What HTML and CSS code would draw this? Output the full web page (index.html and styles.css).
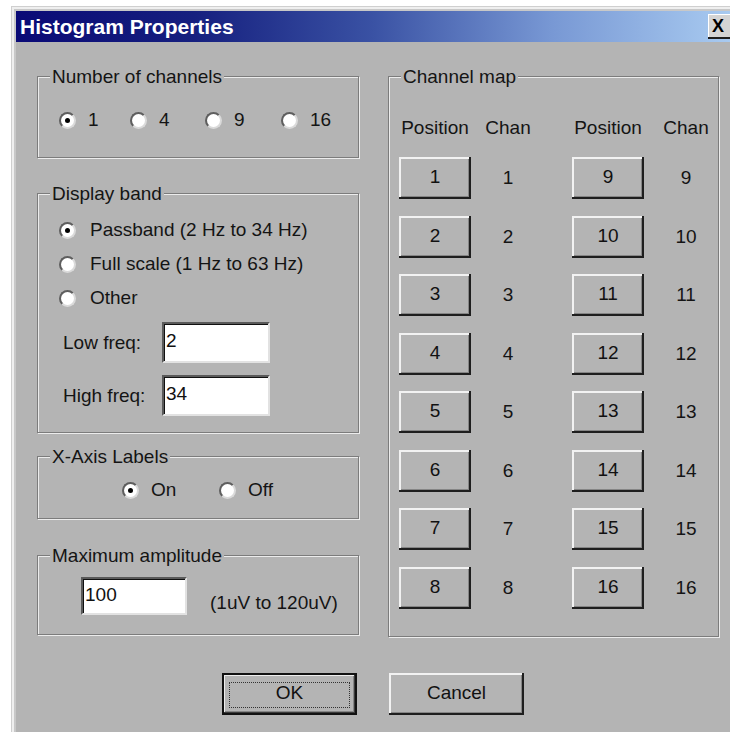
FILE: index.html
```html
<!DOCTYPE html>
<html lang="en">
<head>
<meta charset="utf-8">
<title>Histogram Properties</title>
<link rel="stylesheet" href="styles.css">
</head>
<body>
<div class="window">
  <div class="titlebar">
    <span class="title">Histogram Properties</span>
    <span class="close">X</span>
  </div>
  <div class="client">
    <div class="panels">
      <div class="left">
        <div class="group g-channels">
          <span class="group-title">Number of channels</span>
          <div class="channels">
            <div class="radio checked"><span class="dot"></span>1</div>
            <div class="radio"><span class="dot"></span>4</div>
            <div class="radio"><span class="dot"></span>9</div>
            <div class="radio"><span class="dot"></span>16</div>
          </div>
        </div>

        <div class="group g-band">
          <span class="group-title">Display band</span>
          <div class="band">
            <div class="radio checked"><span class="dot"></span>Passband (2 Hz to 34 Hz)</div>
            <div class="radio"><span class="dot"></span>Full scale (1 Hz to 63 Hz)</div>
            <div class="radio"><span class="dot"></span>Other</div>
            <div class="field field-low">
              <span class="field-label">Low freq:</span>
              <span class="input input-freq">2</span>
            </div>
            <div class="field field-high">
              <span class="field-label">High freq:</span>
              <span class="input input-freq">34</span>
            </div>
          </div>
        </div>

        <div class="group g-axis">
          <span class="group-title">X-Axis Labels</span>
          <div class="axis">
            <div class="radio radio-on checked"><span class="dot"></span>On</div>
            <div class="radio"><span class="dot"></span>Off</div>
          </div>
        </div>

        <div class="group g-amp">
          <span class="group-title">Maximum amplitude</span>
          <div class="amp">
            <span class="input input-amp">100</span>
            <span class="amp-range">(1uV to 120uV)</span>
          </div>
        </div>
      </div>

      <div class="group g-map">
        <span class="group-title">Channel map</span>
        <div class="map-head">
          <span class="cell-pos">Position</span>
          <span class="cell-chan">Chan</span>
          <span class="cell-pos second">Position</span>
          <span class="cell-chan last">Chan</span>
        </div>
        <div class="map-rows">
          <div class="map-row"><span class="btn cell-pos">1</span><span class="cell-chan">1</span><span class="btn cell-pos second">9</span><span class="cell-chan last">9</span></div>
          <div class="map-row"><span class="btn cell-pos">2</span><span class="cell-chan">2</span><span class="btn cell-pos second">10</span><span class="cell-chan last">10</span></div>
          <div class="map-row"><span class="btn cell-pos">3</span><span class="cell-chan">3</span><span class="btn cell-pos second">11</span><span class="cell-chan last">11</span></div>
          <div class="map-row"><span class="btn cell-pos">4</span><span class="cell-chan">4</span><span class="btn cell-pos second">12</span><span class="cell-chan last">12</span></div>
          <div class="map-row"><span class="btn cell-pos">5</span><span class="cell-chan">5</span><span class="btn cell-pos second">13</span><span class="cell-chan last">13</span></div>
          <div class="map-row"><span class="btn cell-pos">6</span><span class="cell-chan">6</span><span class="btn cell-pos second">14</span><span class="cell-chan last">14</span></div>
          <div class="map-row"><span class="btn cell-pos">7</span><span class="cell-chan">7</span><span class="btn cell-pos second">15</span><span class="cell-chan last">15</span></div>
          <div class="map-row"><span class="btn cell-pos">8</span><span class="cell-chan">8</span><span class="btn cell-pos second">16</span><span class="cell-chan last">16</span></div>
        </div>
      </div>
    </div>

    <div class="actions">
      <span class="btn btn-wide btn-default">OK</span>
      <span class="btn btn-wide">Cancel</span>
    </div>
  </div>
</div>
</body>
</html>
```

FILE: styles.css
```css
* {
  box-sizing: border-box;
}

html,
body {
  margin: 0;
}

body {
  background: #ffffff;
  color: #141414;
  font: 19px/22px "Liberation Sans", Arial, sans-serif;
  overflow: hidden;
}

/* dialog frame */
.window {
  margin: 6px 0 0 11px;
  width: 719px;
  height: 726px;
  padding: 5px 0 0 5px;
  background: #b4b4b4;
  box-shadow: inset 1px 1px 0 #cfcfcf, inset 3px 3px 0 #efefef, inset 5px 5px 0 #c8c8c8;
}

.titlebar {
  display: flex;
  align-items: center;
  height: 31px;
  padding-left: 4px;
  overflow: hidden;
  background: linear-gradient(90deg, #0a0a76 0%, #16207f 25%, #3a52a4 50%, #7898d4 75%, #a8caf0 100%);
}

.title {
  color: #ffffff;
  font-weight: bold;
  font-size: 21px;
  line-height: 31px;
}

.close {
  margin-left: auto;
  margin-right: -4px;
  width: 26px;
  height: 25px;
  background: #d4d4d4;
  color: #000;
  font-weight: bold;
  font-size: 18px;
  line-height: 24px;
  padding-left: 4px;
  box-shadow: inset -2px -2px 0 #1e1e1e, inset 1px 1px 0 #ffffff;
}

.client {
  padding-top: 1px;
}

.panels {
  display: flex;
  gap: 29px;
  padding: 33px 0 0 21px;
}

.left {
  display: flex;
  flex-direction: column;
  width: 322px;
}

/* etched group box */
.group {
  position: relative;
  border: 1px solid #7c7c7c;
  box-shadow: inset 1px 1px 0 #ececec, 1px 1px 0 #ececec;
}

.group-title {
  position: absolute;
  top: -11px;
  left: 12px;
  padding: 0 2px;
  background: #b4b4b4;
  line-height: 22px;
  white-space: nowrap;
}

.g-channels {
  height: 82px;
}

.g-band {
  height: 240px;
  margin-top: 35px;
}

.g-axis {
  height: 63px;
  margin-top: 23px;
}

.g-amp {
  height: 80px;
  margin-top: 36px;
}

.g-map {
  width: 331px;
  height: 561px;
  padding: 40px 0 0 10px;
}

/* radio buttons */
.radio {
  display: flex;
  align-items: center;
  gap: 12px;
  height: 22px;
  white-space: nowrap;
}

.dot {
  position: relative;
  flex: none;
  width: 17px;
  height: 17px;
  border-radius: 50%;
  background: #ffffff;
  border: 2px solid;
  border-color: #5e5e5e #dadada #dadada #5e5e5e;
}

.checked .dot::after {
  content: "";
  position: absolute;
  inset: 4px;
  border-radius: 50%;
  background: #000;
}

.channels {
  display: grid;
  grid-template-columns: 71px 75px 76px auto;
  padding: 32px 0 0 21px;
}

.band {
  display: flex;
  flex-direction: column;
  gap: 12px;
  padding: 25px 0 0 21px;
}

.band .radio {
  gap: 14px;
}

.field {
  display: flex;
  align-items: center;
  padding-left: 4px;
}

.field-low {
  margin-top: 1px;
}

.field-label {
  width: 99px;
}

/* sunken edit boxes */
.input {
  display: block;
  background: #ffffff;
  border: 2px solid;
  border-color: #5a5a5a #e2e2e2 #e2e2e2 #5a5a5a;
  box-shadow: inset 1px 1px 0 #111;
  padding-left: 2px;
  color: #111;
}

.input-freq {
  width: 108px;
  height: 41px;
  line-height: 33px;
}

.axis {
  display: flex;
  padding: 22px 0 0 84px;
}

.radio-on {
  width: 97px;
}

.amp {
  display: flex;
  align-items: flex-end;
  gap: 23px;
  padding: 21px 0 0 43px;
}

.input-amp {
  width: 106px;
  height: 38px;
  line-height: 32px;
}

.amp-range {
  padding-bottom: 1px;
}

/* channel map grid */
.map-head,
.map-row {
  display: flex;
  align-items: center;
}

.map-head {
  height: 22px;
}

.cell-pos {
  width: 72px;
  text-align: center;
  flex: none;
}

.cell-chan {
  width: 74px;
  text-align: center;
  flex: none;
}

.cell-pos.second {
  margin-left: 27px;
}

.cell-chan.last {
  padding-left: 10px;
}

.map-rows {
  display: flex;
  flex-direction: column;
  gap: 16.5px;
  margin-top: 18px;
}

/* raised push buttons */
.btn {
  position: relative;
  display: block;
  height: 42px;
  line-height: 40px;
  text-align: center;
  background: #b4b4b4;
  color: #111;
  box-shadow: inset -2px -2px 0 #1e1e1e, inset 2px 2px 0 #f2f2f2, inset -3px -3px 0 #858585;
}

.actions {
  display: flex;
  gap: 32px;
  padding: 36px 0 0 206px;
}

.btn-wide {
  width: 135px;
}

.btn-default {
  box-shadow: inset 0 0 0 2px #111, inset -3px -3px 0 #3a3a3a, inset 3px 3px 0 #eeeeee, inset -4px -4px 0 #858585;
}

.btn-default::after {
  content: "";
  position: absolute;
  inset: 9px 7px 7px 7px;
  border: 1px dotted #333;
}
```
